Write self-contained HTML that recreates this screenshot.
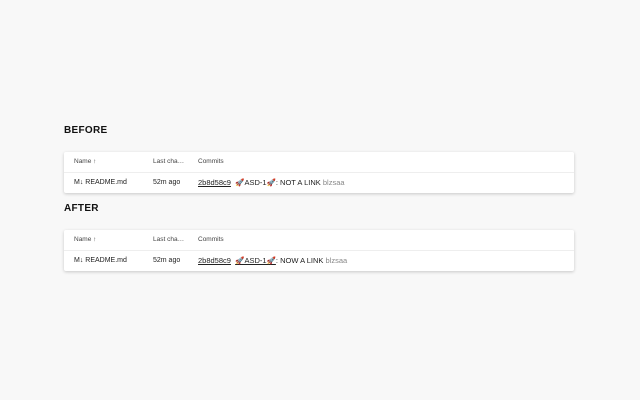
<!DOCTYPE html>
<html><head><style>
body{margin:0;width:640px;height:400px;background:#f8f8f8;font-family:"Liberation Sans",sans-serif;position:relative;overflow:hidden}
h2{position:absolute;left:64px;margin:0;font-size:10px;font-weight:bold;color:#111;letter-spacing:.3px}
.card{position:absolute;left:64px;width:510px;height:41px;background:#fff;box-shadow:0 1px 3px rgba(0,0,0,.2);border-radius:2px}
.r{position:absolute;left:0;right:0;height:20px;font-size:7px;color:#222}
.r1{top:0;border-bottom:1px solid #eee;color:#444;font-size:6.5px}
.r2{top:21px}
.r span{position:absolute;top:7px;white-space:nowrap}
u{text-decoration:underline}
.g{color:#888}
</style></head><body>
<h2 style="top:125px">BEFORE</h2>
<div class="card" style="top:152px">
<div class="r r1"><span style="left:10px;top:6px">Name ↑</span><span style="left:89px;top:6px">Last cha…</span><span style="left:134px;top:6px">Commits</span></div>
<div class="r r2"><span style="left:10px;top:6px">M↓ README.md</span><span style="left:89px;top:6px">52m ago</span><span style="left:134px;top:5px;font-size:7.5px"><u>2b8d58c9</u> &nbsp;🚀ASD-1🚀: NOT A LINK <span class="g" style="position:static">blzsaa</span></span></div>
</div>
<h2 style="top:203px">AFTER</h2>
<div class="card" style="top:230px">
<div class="r r1"><span style="left:10px;top:6px">Name ↑</span><span style="left:89px;top:6px">Last cha…</span><span style="left:134px;top:6px">Commits</span></div>
<div class="r r2"><span style="left:10px;top:6px">M↓ README.md</span><span style="left:89px;top:6px">52m ago</span><span style="left:134px;top:5px;font-size:7.5px"><u>2b8d58c9</u> &nbsp;<u>🚀ASD-1🚀</u>: NOW A LINK <span class="g" style="position:static">blzsaa</span></span></div>
</div>
</body></html>
